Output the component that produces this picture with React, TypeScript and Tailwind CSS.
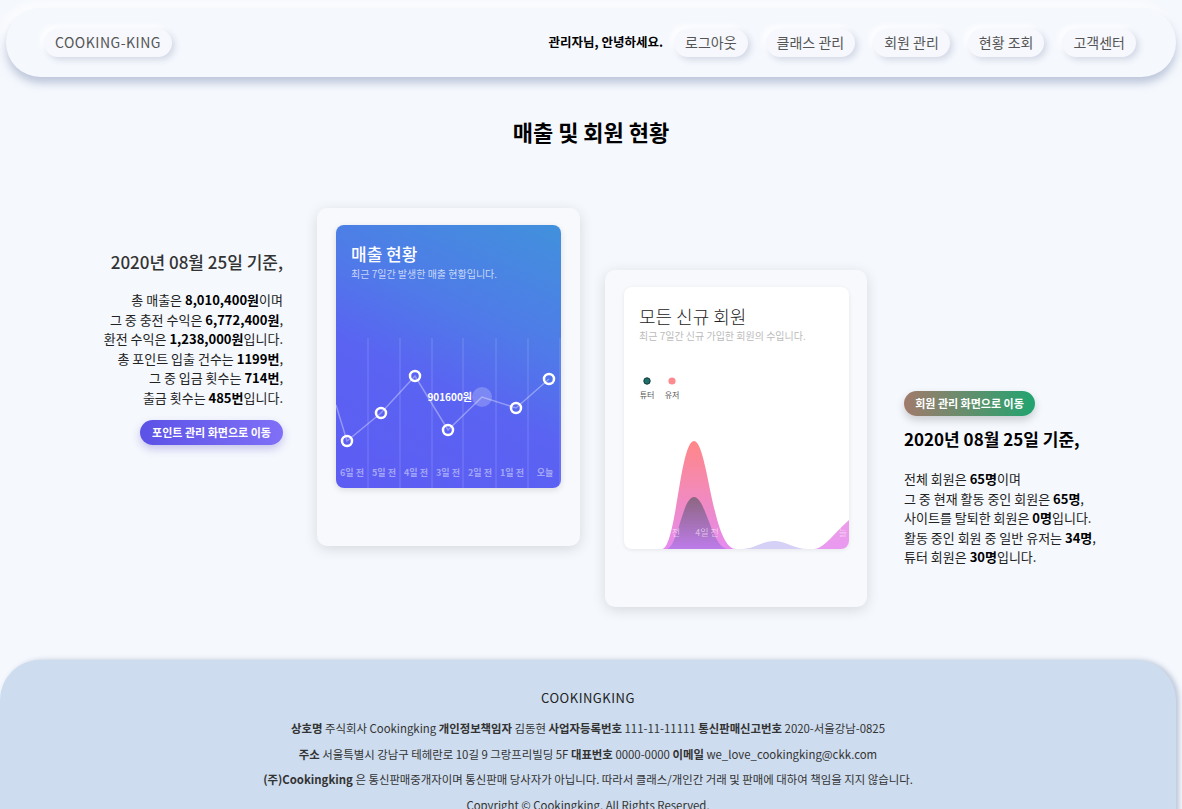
import React from "react";

const font = { fontFamily: '"Noto Sans CJK KR", "Noto Sans", sans-serif' };

function NavPill({ children }: { children: React.ReactNode }) {
  return (
    <div className="h-[28px] px-[11px] flex items-center rounded-full bg-[#f6f8fd] text-[14px] text-[#555] shadow-[3px_3px_6px_#d3d9e6,-3px_-3px_6px_#ffffff]">
      {children}
    </div>
  );
}

function SalesChart() {
  const pts: [number, number][] = [
    [11, 216],
    [45, 188],
    [79, 151],
    [112, 205],
    [146, 172],
    [180, 183],
    [213, 154],
  ];
  const labels = ["6일 전", "5일 전", "4일 전", "3일 전", "2일 전", "1일 전", "오늘"];
  const centers = [16, 48, 80, 112, 144, 176, 209];
  const lines = [32, 64, 96, 127, 160, 192, 224];
  return (
    <svg width="225" height="263" className="absolute inset-0">
      {lines.map((x) => (
        <line key={x} x1={x} y1={113} x2={x} y2={263} stroke="rgba(255,255,255,0.18)" strokeWidth="1" />
      ))}
      <polyline
        points={"0,180 " + pts.map((p) => p.join(",")).join(" ")}
        fill="none"
        stroke="rgba(255,255,255,0.35)"
        strokeWidth="1.5"
      />
      <circle cx={146} cy={172} r={10} fill="rgba(255,255,255,0.22)" />
      {pts.map(([x, y], i) =>
        i === 4 ? null : (
          <circle key={i} cx={x} cy={y} r={5} fill="none" stroke="#fff" strokeWidth="2.5" />
        )
      )}
      <text x={136} y={176} textAnchor="end" fill="#fff" fontSize="10" fontWeight="700" style={font}>
        901600원
      </text>
      {labels.map((l, i) => (
        <text key={l} x={centers[i]} y={251} textAnchor="middle" fill="rgba(255,255,255,0.45)" fontSize="9" fontWeight="700" style={font}>
          {l}
        </text>
      ))}
    </svg>
  );
}

function MemberChart() {
  return (
    <svg width="225" height="262" className="absolute inset-0">
      <defs>
        <linearGradient id="pk" x1="0" y1="0" x2="0" y2="1">
          <stop offset="0" stopColor="#ff8787" />
          <stop offset="1" stopColor="#e58cf0" />
        </linearGradient>
        <linearGradient id="dk" x1="0" y1="0" x2="0" y2="1">
          <stop offset="0" stopColor="#8c6680" />
          <stop offset="1" stopColor="#bd7cea" />
        </linearGradient>
        <linearGradient id="rt" x1="0" y1="0" x2="0" y2="1">
          <stop offset="0" stopColor="#ee9ce8" />
          <stop offset="1" stopColor="#e89af0" />
        </linearGradient>
      </defs>
      <circle cx={23} cy={94} r={3.2} fill="#1f6f6a" stroke="#0f3a38" strokeWidth="1" />
      <circle cx={48} cy={94} r={3.6} fill="#ff8a8f" />
      <text x={23} y={111} textAnchor="middle" fontSize="8" fill="#555" style={font}>튜터</text>
      <text x={48} y={111} textAnchor="middle" fontSize="8" fill="#555" style={font}>유저</text>
      <path d="M38 262 C52 262 56 154 70 154 C84 154 88 262 112 262 Z" fill="url(#pk)" />
      <path d="M42 262 C54 262 58 210 70 210 C82 210 88 262 104 262 Z" fill="url(#dk)" />
      <path d="M118 262 C130 262 138 254 150 254 C162 254 170 262 184 262 Z" fill="#d5d0f6" />
      <path d="M190 262 C200 262 212 244 225 233 L225 262 Z" fill="url(#rt)" />
      <text x={52} y={249} textAnchor="middle" fontSize="9" fill="rgba(255,255,255,0.55)" style={font}>전</text>
      <text x={83} y={249} textAnchor="middle" fontSize="9" fill="rgba(255,255,255,0.55)" style={font}>4일 전</text>
      <text x={219} y={249} textAnchor="middle" fontSize="9" fill="rgba(255,255,255,0.45)" style={font}>늘</text>
    </svg>
  );
}

export default function App() {
  return (
    <div className="min-h-screen bg-[#f5f8fd] text-[#222] overflow-hidden" style={font}>
      {/* Header */}
      <header className="mx-[6px] mt-[8px] h-[69px] rounded-[40px] bg-[#f5f8fd] shadow-[0_6px_8px_rgba(150,165,195,0.6),-4px_-4px_10px_#ffffff] flex items-center justify-between pl-[38px] pr-[40px]">
        <div className="h-[28px] px-[11px] flex items-center rounded-full bg-[#f6f8fd] text-[14px] tracking-[0.5px] text-[#555] shadow-[3px_3px_6px_#d3d9e6,-3px_-3px_6px_#ffffff]">
          COOKING-KING
        </div>
        <div className="flex items-center">
          <span className="text-[12.5px] font-bold text-black mr-[11px]">관리자님, 안녕하세요.</span>
          <div className="flex items-center gap-[18px]">
            <NavPill>로그아웃</NavPill>
            <NavPill>클래스 관리</NavPill>
            <NavPill>회원 관리</NavPill>
            <NavPill>현황 조회</NavPill>
            <NavPill>고객센터</NavPill>
          </div>
        </div>
      </header>

      {/* Main */}
      <main className="pt-[40px]">
        <h1 className="text-center text-[22px] leading-[28px] font-bold text-black">매출 및 회원 현황</h1>

        <div className="mt-[63px] flex items-start">
          {/* Left text */}
          <div className="ml-[63px] w-[220px] flex flex-col items-end text-right mt-[42px]">
            <h2 className="text-[17px] leading-[24px] font-medium text-[#333]">2020년 08월 25일 기준,</h2>
            <p className="mt-[16px] text-[13px] leading-[19.6px] text-[#222]">
              총 매출은 <b className="text-black">8,010,400원</b>이며
              <br />그 중 충전 수익은 <b className="text-black">6,772,400원</b>,
              <br />환전 수익은 <b className="text-black">1,238,000원</b>입니다.
              <br />총 포인트 입출 건수는 <b className="text-black">1199번</b>,
              <br />그 중 입금 횟수는 <b className="text-black">714번</b>,
              <br />출금 횟수는 <b className="text-black">485번</b>입니다.
            </p>
            <button className="mt-[12px] h-[25px] w-[143px] rounded-full bg-[linear-gradient(90deg,#5b52e6,#8070f7)] text-white text-[11px] font-bold shadow-[0_4px_8px_rgba(90,80,200,0.3)]">
              포인트 관리 화면으로 이동
            </button>
          </div>

          {/* Card 1 */}
          <div className="ml-[34px] w-[263px] h-[338px] rounded-[10px] bg-[#f7f9fd] shadow-[0_3px_14px_rgba(0,0,0,0.13)] pt-[17px] pl-[19px]">
            <div className="relative w-[225px] h-[263px] rounded-[8px] overflow-hidden bg-[linear-gradient(205deg,#4191dc_0%,#4f7be8_35%,#5a63f2_60%,#5d5cf3_100%)] shadow-[0_2px_6px_rgba(0,0,0,0.12)]">
              <SalesChart />
              <div className="relative px-[15px] pt-[17px]">
                <div className="text-[17px] leading-[24px] font-medium text-white">매출 현황</div>
                <div className="text-[10px] leading-[14px] mt-[1px] text-white/70">최근 7일간 발생한 매출 현황입니다.</div>
              </div>
            </div>
          </div>

          {/* Card 2 */}
          <div className="ml-[25px] mt-[62px] w-[262px] h-[337px] rounded-[10px] bg-[#f7f9fd] shadow-[0_3px_14px_rgba(0,0,0,0.13)] pt-[17px] pl-[19px]">
            <div className="relative w-[225px] h-[262px] rounded-[8px] overflow-hidden bg-white shadow-[0_1px_4px_rgba(0,0,0,0.08)]">
              <MemberChart />
              <div className="relative px-[15px] pt-[16px]">
                <div className="text-[18px] leading-[26px] font-light text-[#222]">모든 신규 회원</div>
                <div className="text-[10px] leading-[14px] text-[#bbb]">최근 7일간 신규 가입한 회원의 수입니다.</div>
              </div>
            </div>
          </div>

          {/* Right text */}
          <div className="ml-[37px] mt-[183px] flex flex-col items-start">
            <button className="h-[25px] w-[131px] rounded-full bg-[linear-gradient(90deg,#a17a6b,#21a46f)] text-white text-[11px] font-bold shadow-[0_4px_8px_rgba(0,0,0,0.18)]">
              회원 관리 화면으로 이동
            </button>
            <h2 className="mt-[11px] text-[17px] leading-[24px] font-bold text-black">2020년 08월 25일 기준,</h2>
            <p className="mt-[18px] text-[13px] leading-[19.6px] text-[#222]">
              전체 회원은 <b className="text-black">65명</b>이며
              <br />그 중 현재 활동 중인 회원은 <b className="text-black">65명</b>,
              <br />사이트를 탈퇴한 회원은 <b className="text-black">0명</b>입니다.
              <br />활동 중인 회원 중 일반 유저는 <b className="text-black">34명</b>,
              <br />튜터 회원은 <b className="text-black">30명</b>입니다.
            </p>
          </div>
        </div>
      </main>

      {/* Footer */}
      <footer className="mt-[53px] mr-[6px] rounded-t-[40px] bg-[#cddcee] shadow-[3px_0_5px_rgba(120,140,170,0.45)] pt-[28px] pb-[20px] text-center text-[#333]">
        <div className="text-[13px] leading-[20px] tracking-[0.5px] text-[#222]">COOKINGKING</div>
        <div className="mt-[13px] text-[11.4px] leading-[15px]">
          <b>상호명</b> 주식회사 Cookingking <b>개인정보책임자</b> 김동현 <b>사업자등록번호</b> 111-11-11111 <b>통신판매신고번호</b> 2020-서울강남-0825
        </div>
        <div className="mt-[10.5px] text-[11.4px] leading-[15px]">
          <b>주소</b> 서울특별시 강남구 테헤란로 10길 9 그랑프리빌딩 5F <b>대표번호</b> 0000-0000 <b>이메일</b> we_love_cookingking@ckk.com
        </div>
        <div className="mt-[10.5px] text-[11.4px] leading-[15px]">
          <b>(주)Cookingking</b> 은 통신판매중개자이며 통신판매 당사자가 아닙니다. 따라서 클래스/개인간 거래 및 판매에 대하여 책임을 지지 않습니다.
        </div>
        <div className="mt-[10.5px] text-[11.4px] leading-[15px]">Copyright © Cookingking. All Rights Reserved.</div>
      </footer>
    </div>
  );
}
